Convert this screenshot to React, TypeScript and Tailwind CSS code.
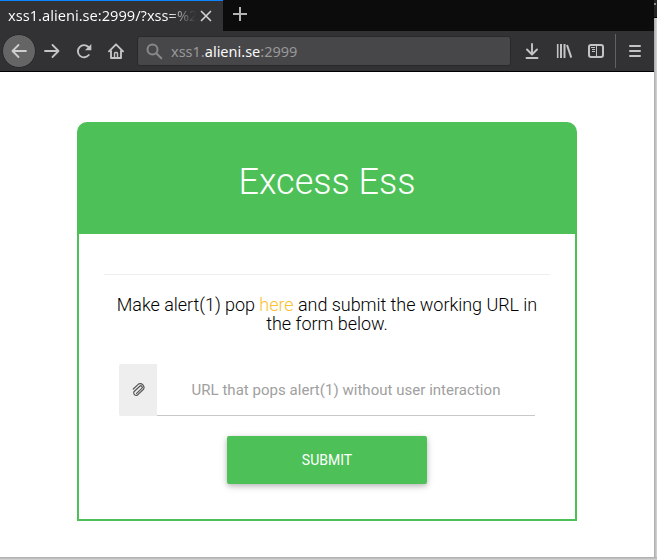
import React from "react";

function Tab() {
  return (
    <div className="flex h-[31px] w-[223px] items-center border-t border-[#0a84ff] bg-[#323234]">
      <div className="-mt-[2px] ml-2 w-[188px] overflow-hidden whitespace-nowrap bg-gradient-to-r from-white from-[85%] to-[#323234] bg-clip-text text-[14.6px] leading-[20px] text-transparent">
        xss1.alieni.se:2999/?xss=%2
      </div>
      <svg className="ml-[4px] h-[12px] w-[12px]" viewBox="0 0 12 12" fill="none" stroke="#cfcfd0" strokeWidth="1.7" strokeLinecap="round">
        <path d="M1.5 1.5 10.5 10.5M10.5 1.5 1.5 10.5" />
      </svg>
    </div>
  );
}

function Toolbar() {
  return (
    <div className="flex h-[41px] items-center border-b border-black bg-[#323234]">
      <div className="ml-[2px] flex h-[34px] w-[34px] shrink-0 items-center justify-center rounded-full border border-[#28282a] bg-[#656566]">
        <svg className="h-4 w-4" viewBox="0 0 16 16" fill="none" stroke="#cfcfcf" strokeWidth="1.8" strokeLinecap="round" strokeLinejoin="round">
          <path d="M15 8H1.5M7.5 2 1.5 8l6 6" />
        </svg>
      </div>
      <svg className="ml-[8px] h-4 w-4 shrink-0" viewBox="0 0 16 16" fill="none" stroke="#c4c4c5" strokeWidth="1.8" strokeLinecap="round" strokeLinejoin="round">
        <path d="M1 8h13.5M8.5 2l6 6-6 6" />
      </svg>
      <svg className="ml-4 h-4 w-4 shrink-0" viewBox="0 0 16 16" fill="none" stroke="#c4c4c5" strokeWidth="1.9" strokeLinecap="round">
        <path d="M12.8 12A6.1 6.1 0 1 1 12.4 4" />
        <path d="M15.3 1v6.2H9z" fill="#c4c4c5" stroke="none" />
      </svg>
      <svg className="ml-4 h-4 w-4 shrink-0" viewBox="0 0 16 16" fill="none" stroke="#c4c4c5" strokeWidth="1.9" strokeLinecap="round" strokeLinejoin="round">
        <path d="M1 8.3 8 1.3l7 7M3 8v7h10V8" />
        <path d="M6.5 15v-4.5q0-1 1-1h1q1 0 1 1V15" strokeWidth="1.4" />
      </svg>
      <div className="ml-[13px] flex h-[30px] w-[374px] shrink-0 items-center rounded-[3px] border border-[#29292b] bg-[#474749]">
        <svg className="ml-2 h-[17px] w-[17px]" viewBox="0 0 17 17" fill="none" stroke="#88888a" strokeWidth="2" strokeLinecap="round">
          <circle cx="6.5" cy="6.5" r="5" />
          <path d="m10.3 10.3 5 5" />
        </svg>
        <div className="ml-2 whitespace-nowrap text-[14.5px] leading-5 text-[#98989a]">
          xss1.<span className="text-[#f9f9fa]">alieni.se</span>:2999
        </div>
      </div>
      <svg className="ml-[13px] h-4 w-4 shrink-0" viewBox="0 0 16 16" fill="none" stroke="#c4c4c5" strokeWidth="1.9" strokeLinecap="round" strokeLinejoin="round">
        <path d="M8 1v10M3 6.5l5 5 5-5M2.5 15h11" />
      </svg>
      <svg className="ml-4 h-4 w-4 shrink-0" viewBox="0 0 16 16" fill="none" stroke="#c4c4c5">
        <path d="M1.7 1v14" strokeWidth="1.6" />
        <path d="M5 1v14M8.5 1v14" strokeWidth="2" />
        <path d="m11 2 4.3 12.6" strokeWidth="2" />
      </svg>
      <svg className="ml-4 h-4 w-4 shrink-0" viewBox="0 0 16 16" fill="none" stroke="#c4c4c5">
        <rect x="1" y="2" width="14" height="12" rx="2" strokeWidth="2" />
        <path d="M8.5 2v12" />
        <path d="M3 4.5h4M4 6.5h3M4 8.5h3" />
      </svg>
      <div className="ml-[11px] h-[34px] w-px shrink-0 bg-[#626264]" />
      <svg className="ml-[11px] h-4 w-4 shrink-0" viewBox="0 0 16 16" fill="none" stroke="#c4c4c5" strokeWidth="2" strokeLinecap="round">
        <path d="M3 3h10M3 8h10M3 13h10" />
      </svg>
    </div>
  );
}

function Challenge() {
  return (
    <div className="ml-[77px] mt-[50px] h-[399px] w-[500px] rounded-t-[10px] border-2 border-[#4dc157] bg-[#4dc157] text-center font-[Roboto,sans-serif]">
      <h1 className="flex h-[110px] items-center justify-center pt-[6px] text-[36px] font-light leading-[40px] text-white">Excess Ess</h1>
      <div className="h-[285px] bg-white px-[25px] pt-[40px]">
        <hr className="border-[#eeeeee]" />
        <p className="mt-5 text-[18px] font-light leading-[19px] tracking-[-0.04px] text-black">
          Make alert(1) pop <a className="text-[#fbc02d]">here</a> and submit the working URL in
          <br />
          the form below.
        </p>
        <div className="ml-[15px] mt-[31px] flex h-[52px] w-[416px]">
          <div className="flex w-[38px] items-center justify-center rounded-l-[2px] bg-[#eeeeee]">
            <svg className="-mt-[3px] h-[16px] w-[16px]" viewBox="0 0 16 16" fill="none" stroke="#555555" strokeWidth="1.2" strokeLinecap="round">
              <path
                transform="rotate(-43 8 8)"
                d="M4 10.200H11.200A1.400 1.400 0 0 0 11.200 7.200H3.200A2.600 2.600 0 0 0 3.200 12H12A3.900 3.900 0 0 0 12 4.800H4.500"
              />
            </svg>
          </div>
          <input
            className="w-[378px] border-b border-[#c8c8c8] bg-white pt-px text-center text-[15px] tracking-[0.03px] text-[#666] outline-none placeholder:text-[#a0a0a0]"
            placeholder="URL that pops alert(1) without user interaction"
          />
        </div>
        <button className="mt-5 h-12 w-[200px] rounded-[2px] bg-[#4dc157] text-[14px] text-white shadow-[0_2px_5px_rgba(0,0,0,0.2),0_2px_10px_rgba(0,0,0,0.12)]">
          SUBMIT
        </button>
      </div>
    </div>
  );
}

export default function App() {
  return (
    <div className="flex h-[560px] w-[657px] flex-col overflow-hidden bg-[#d6d6d6] font-['Noto_Sans',sans-serif]">
      <div className="flex h-[557px]">
        <div className="w-[654px] bg-white">
          <div className="flex h-[31px] bg-[#0c0c0d]">
            <Tab />
            <svg className="ml-[9px] mt-[6px] h-4 w-4" viewBox="0 0 16 16" fill="none" stroke="#b4b4b4" strokeWidth="2">
              <path d="M8 1v14M1 8h14" />
            </svg>
          </div>
          <Toolbar />
          <Challenge />
        </div>
        <div className="flex w-[3px] flex-col">
          <div className="h-[18px] border-b border-black bg-[#252526] pt-[3px]">
            <div className="h-[2px] w-[2px] bg-[#888888]" />
          </div>
          <div className="flex-1 bg-gradient-to-r from-[#aaaaaa] to-[#d8d8d8]" />
        </div>
      </div>
      <div className="h-[3px] bg-gradient-to-b from-[#aaaaaa] to-[#d8d8d8]" />
    </div>
  );
}
